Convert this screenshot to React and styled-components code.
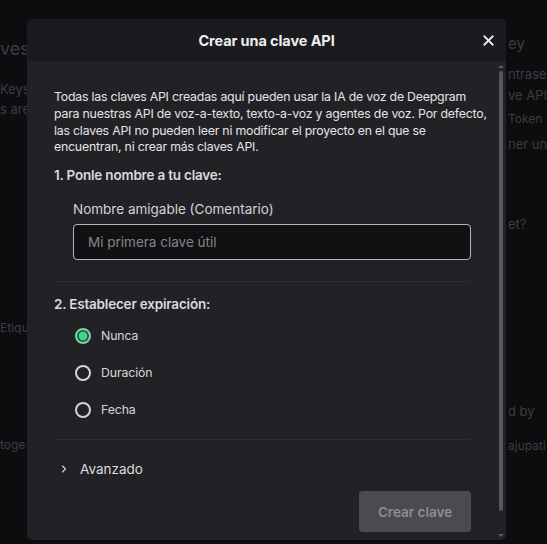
import React, { useState } from 'react';
import styled, { createGlobalStyle } from 'styled-components';
import { ChevronRight, X } from 'lucide-react';

const GlobalStyle = createGlobalStyle`
  * { box-sizing: border-box; }
  body {
    margin: 0;
    background: #0d0d0f;
    font-family: Inter, "Noto Sans", sans-serif;
    -webkit-font-smoothing: antialiased;
  }
`;

const Page = styled.div`
  position: relative;
  width: 547px;
  height: 544px;
  overflow: hidden;
  background: #0d0d0f;
  display: flex;
`;

const SideColumn = styled.div`
  width: ${({ $width }) => $width}px;
  display: flex;
  flex-direction: column;
  align-items: flex-start;
  padding-left: ${({ $pad }) => $pad || 0}px;
`;

const Spacer = styled.div`
  flex: 1;
`;

const GhostText = styled.div`
  margin-top: ${({ $top }) => $top}px;
  font-size: ${({ $size }) => $size || 13}px;
  line-height: ${({ $size }) => ($size || 13) + 4}px;
  color: #3c3c41;
  white-space: nowrap;
`;

const Modal = styled.div`
  position: absolute;
  left: 27px;
  top: 19px;
  width: 479px;
  height: 521px;
  background: #222226;
  border-radius: 5px;
  overflow: hidden;
  display: flex;
  flex-direction: column;
`;

const Header = styled.div`
  height: 42px;
  flex-shrink: 0;
  background: #1b1b1f;
  display: grid;
  grid-template-columns: 1fr auto 1fr;
  align-items: center;
`;

const Title = styled.h2`
  grid-column: 2;
  margin: 0;
  font-size: 14.5px;
  font-weight: 700;
  letter-spacing: -0.1px;
  color: #ededed;
`;

const CloseButton = styled.button`
  justify-self: end;
  margin-right: 9px;
  background: none;
  border: none;
  padding: 0;
  color: #e8e8e8;
  display: flex;
  cursor: pointer;
`;

const BodyWrap = styled.div`
  flex: 1;
  display: flex;
`;

const Content = styled.div`
  flex: 1;
  min-width: 0;
  padding: 28px 25px 0 27px;
  display: flex;
  flex-direction: column;
`;

const Scrollbar = styled.div`
  width: 10px;
  flex-shrink: 0;
  display: flex;
  flex-direction: column;
  align-items: center;
  padding: 4px 0 3px;
`;

const Arrow = styled.div`
  width: 0;
  height: 0;
  border-left: 3px solid transparent;
  border-right: 3px solid transparent;
  ${({ $down }) =>
    $down ? 'border-top: 3px solid #5a5a5f;' : 'border-bottom: 3px solid #5a5a5f;'}
`;

const Thumb = styled.div`
  width: 4px;
  margin: 3px 0 auto;
  height: 440px;
  border-radius: 2px;
  background: #56565b;
`;

const Intro = styled.p`
  margin: 0;
  font-size: 12.3px;
  line-height: 16.8px;
  letter-spacing: -0.2px;
  color: #e4e4e4;
  white-space: nowrap;
`;

const SectionTitle = styled.h3`
  margin: ${({ $top }) => $top}px 0 0;
  font-size: 13.5px;
  line-height: 18px;
  font-weight: 600;
  letter-spacing: -0.2px;
  color: #dadada;
`;

const Field = styled.div`
  margin-top: 16px;
  padding-left: 19px;
  display: flex;
  flex-direction: column;
  gap: 6px;
`;

const Label = styled.label`
  font-size: 13.5px;
  line-height: 18px;
  color: #d2d2d2;
`;

const Input = styled.input`
  height: 36px;
  width: 100%;
  background: #111114;
  border: 1px solid #b4b4b8;
  border-radius: 4px;
  padding: 0 14px;
  font-family: inherit;
  font-size: 13.5px;
  color: #e0e0e0;
  outline: none;
  &::placeholder {
    color: #85858a;
  }
`;

const Divider = styled.hr`
  margin: ${({ $top }) => $top}px 0 0;
  border: none;
  border-top: 1px solid #2c2c31;
`;

const RadioList = styled.div`
  margin-top: 4px;
  display: flex;
  flex-direction: column;
`;

const RadioRow = styled.label`
  height: 37px;
  padding-left: 21px;
  display: flex;
  align-items: center;
  gap: 10px;
  font-size: 12.3px;
  letter-spacing: -0.1px;
  color: #d6d6d6;
  cursor: pointer;
`;

const RadioDot = styled.span`
  width: 16px;
  height: 16px;
  border-radius: 50%;
  border: 2px solid ${({ $checked }) => ($checked ? '#7ccf9f' : '#d4d4d4')};
  background: ${({ $checked }) => ($checked ? '#3bd68a' : 'transparent')};
  box-shadow: ${({ $checked }) => ($checked ? 'inset 0 0 0 1.5px #1e3a2c' : 'none')};
`;

const Advanced = styled.button`
  margin-top: 19px;
  align-self: flex-start;
  background: none;
  border: none;
  padding: 0 0 0 4px;
  display: flex;
  align-items: center;
  gap: 10px;
  font-family: inherit;
  font-size: 13.5px;
  line-height: 20px;
  color: #dcdcdc;
  cursor: pointer;
`;

const SubmitButton = styled.button`
  margin-top: 12px;
  align-self: flex-end;
  width: 112px;
  height: 41px;
  border: none;
  border-radius: 4px;
  background: #4a4a4f;
  color: #8e8e93;
  font-family: inherit;
  font-size: 13.5px;
  font-weight: 600;
`;

const options = ['Nunca', 'Duración', 'Fecha'];

export default function App() {
  const [expiry, setExpiry] = useState('Nunca');

  return (
    <>
      <GlobalStyle />
      <Page>
        <SideColumn $width={27}>
          <GhostText $top={38} $size={18}>ves</GhostText>
          <GhostText $top={21}>Keys</GhostText>
          <GhostText $top={3}>s are</GhostText>
          <GhostText $top={202} $size={12}>Etiqu</GhostText>
          <GhostText $top={101} $size={12}>toge</GhostText>
        </SideColumn>
        <Spacer />
        <SideColumn $width={40} $pad={1}>
          <GhostText $top={34} $size={15}>ey</GhostText>
          <GhostText $top={13}>ntrase</GhostText>
          <GhostText $top={4}>ve API</GhostText>
          <GhostText $top={7} $size={12}>Token</GhostText>
          <GhostText $top={9}>ner un</GhostText>
          <GhostText $top={63}>et?</GhostText>
          <GhostText $top={170}>d by</GhostText>
          <GhostText $top={18} $size={12}>ajupati</GhostText>
        </SideColumn>

        <Modal>
          <Header>
            <Title>Crear una clave API</Title>
            <CloseButton aria-label="Cerrar">
              <X size={17} strokeWidth={2.6} />
            </CloseButton>
          </Header>
          <BodyWrap>
            <Content>
              <Intro>
                Todas las claves API creadas aquí pueden usar la IA de voz de Deepgram
                <br />
                para nuestras API de voz-a-texto, texto-a-voz y agentes de voz. Por defecto,
                <br />
                las claves API no pueden leer ni modificar el proyecto en el que se
                <br />
                encuentran, ni crear más claves API.
              </Intro>
              <SectionTitle $top={10}>1. Ponle nombre a tu clave:</SectionTitle>
              <Field>
                <Label>Nombre amigable (Comentario)</Label>
                <Input placeholder="Mi primera clave útil" />
              </Field>
              <Divider $top={21} />
              <SectionTitle $top={13}>2. Establecer expiración:</SectionTitle>
              <RadioList>
                {options.map((o) => (
                  <RadioRow key={o} onClick={() => setExpiry(o)}>
                    <RadioDot $checked={expiry === o} />
                    {o}
                  </RadioRow>
                ))}
              </RadioList>
              <Divider $top={11} />
              <Advanced>
                <ChevronRight size={12} strokeWidth={2.2} />
                Avanzado
              </Advanced>
              <SubmitButton disabled>Crear clave</SubmitButton>
            </Content>
            <Scrollbar>
              <Arrow />
              <Thumb />
              <Arrow $down />
            </Scrollbar>
          </BodyWrap>
        </Modal>
      </Page>
    </>
  );
}
